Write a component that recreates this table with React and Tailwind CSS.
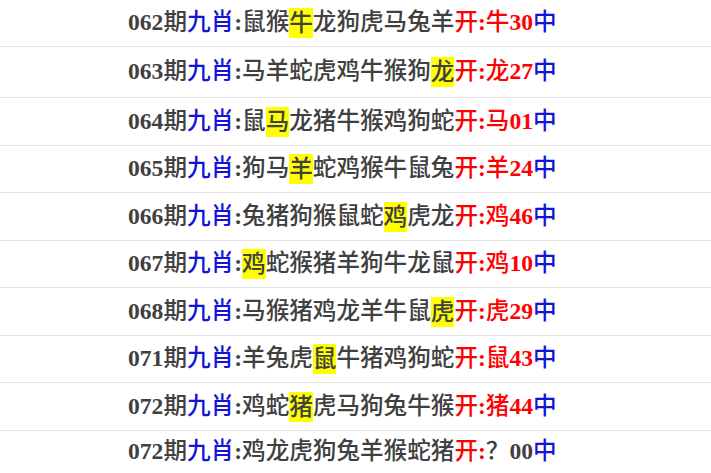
import React from "react";

const rows = [
  { no: "062", animals: "鼠猴牛龙狗虎马兔羊", hit: 2, res: "牛", num: "30", h: "h-[47px]" },
  { no: "063", animals: "马羊蛇虎鸡牛猴狗龙", hit: 8, res: "龙", num: "27", h: "h-[51px]" },
  { no: "064", animals: "鼠马龙猪牛猴鸡狗蛇", hit: 1, res: "马", num: "01", h: "h-[48px]" },
  { no: "065", animals: "狗马羊蛇鸡猴牛鼠兔", hit: 2, res: "羊", num: "24", h: "h-[47px]" },
  { no: "066", animals: "兔猪狗猴鼠蛇鸡虎龙", hit: 6, res: "鸡", num: "46", h: "h-[48px]" },
  { no: "067", animals: "鸡蛇猴猪羊狗牛龙鼠", hit: 0, res: "鸡", num: "10", h: "h-[47px]" },
  { no: "068", animals: "马猴猪鸡龙羊牛鼠虎", hit: 8, res: "虎", num: "29", h: "h-[48px]" },
  { no: "071", animals: "羊兔虎鼠牛猪鸡狗蛇", hit: 3, res: "鼠", num: "43", h: "h-[47px]" },
  { no: "072", animals: "鸡蛇猪虎马狗兔牛猴", hit: 2, res: "猪", num: "44", h: "h-[48px]" },
  { no: "072", animals: "鸡龙虎狗兔羊猴蛇猪", hit: -1, res: null, num: "00", h: "h-[43px]" },
];

export default function App() {
  return (
    <div
      className="w-[711px] h-[473px] overflow-hidden bg-white"
      style={{ fontFamily: '"Liberation Serif", "Noto Sans CJK SC", serif' }}
    >
      {rows.map((r, i) => (
        <div
          key={i}
          className={`${r.h} flex items-center pl-[128px] border-b border-[#e3e3e3] text-[23.6px] font-medium text-[#404040] leading-none whitespace-nowrap`}
        >
          <span className="font-bold">{r.no}</span>
          <span>期</span>
          <span className="text-[#1414d8]">九肖</span>
          <span className="font-bold">:</span>
          {r.animals.split("").map((a, j) =>
            j === r.hit ? (
              <span key={j} className="inline-block bg-[#ffff00] leading-[30px]">
                {a}
              </span>
            ) : (
              <span key={j}>{a}</span>
            )
          )}
          <span className="text-[#ff0000]">开</span>
          <span className="text-[#ff0000] font-bold">:</span>
          {r.res ? (
            <>
              <span className="text-[#ff0000]">{r.res}</span>
              <span className="text-[#ff0000] font-bold">{r.num}</span>
            </>
          ) : (
            <>
              <span>？</span>
              <span className="font-bold">{r.num}</span>
            </>
          )}
          <span className="text-[#1414d8]">中</span>
        </div>
      ))}
    </div>
  );
}
